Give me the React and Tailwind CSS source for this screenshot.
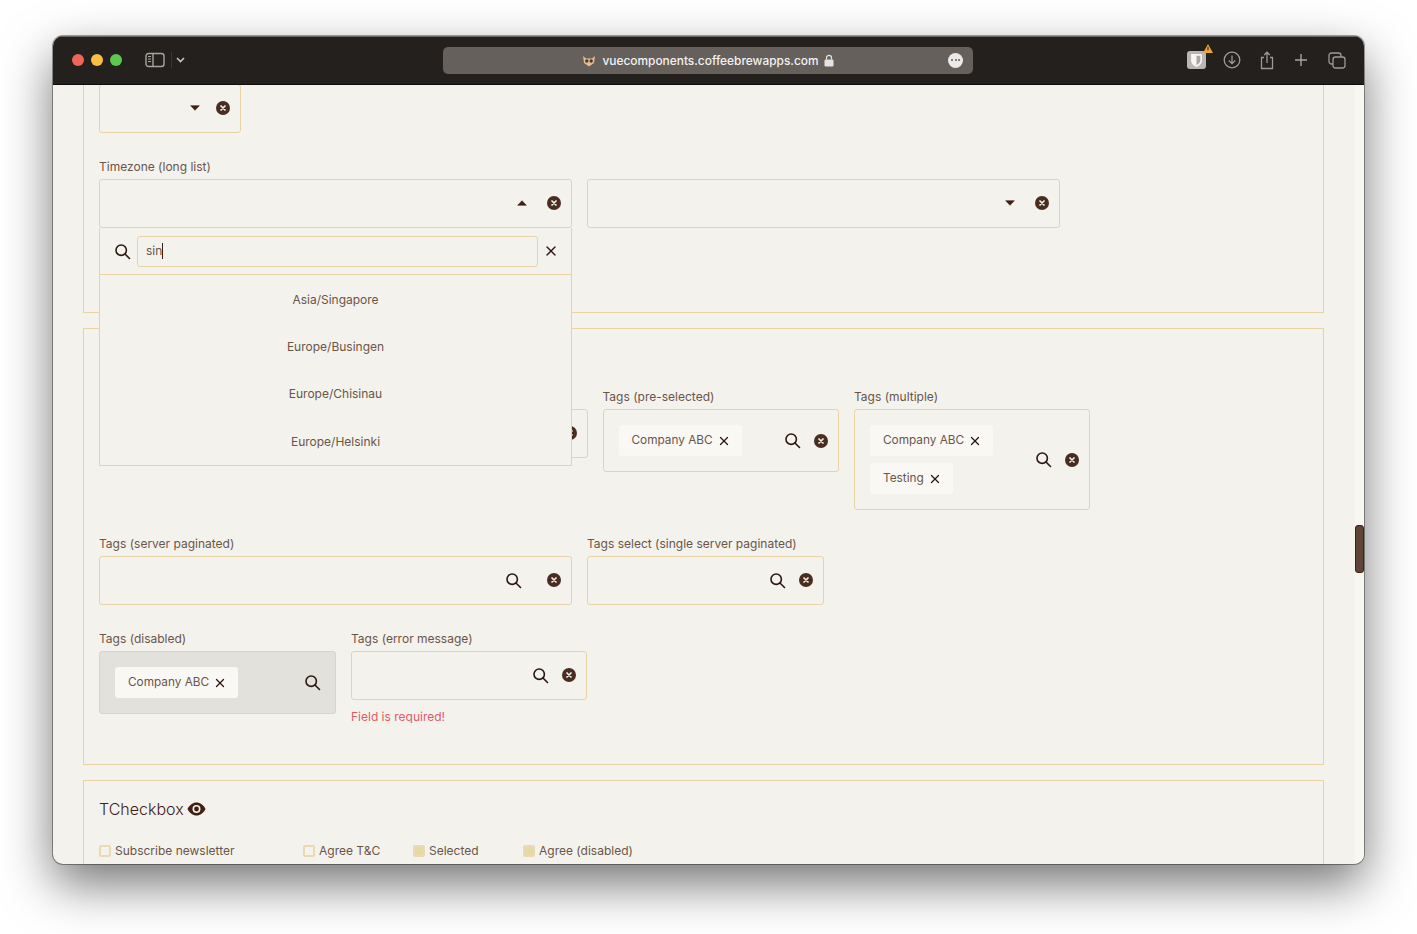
// Safari window showing the vue components form page
import React from "react";
import { X } from "lucide-react";

const timezones = ["Asia/Singapore", "Europe/Busingen", "Europe/Chisinau", "Europe/Helsinki"];

function ClearIcon() {
  return (
    <svg width="14" height="14" viewBox="0 0 14 14" className="shrink-0">
      <circle cx="7" cy="7" r="7" fill="#4a2c20" />
      <path d="M5 5l4 4M9 5l-4 4" stroke="#f4f2ed" strokeWidth="1.7" strokeLinecap="round" />
    </svg>
  );
}

function Caret({ up }) {
  return (
    <svg width="10" height="6" viewBox="0 0 10 6" className="shrink-0">
      <path d={up ? "M5 .7L9.300 5.300H.7z" : "M5 5.300L.7 .7h8.600z"} fill="#3f2114" stroke="#3f2114" strokeWidth=".6" strokeLinejoin="round" />
    </svg>
  );
}

function SearchIcon() {
  return (
    <svg width="17" height="17" viewBox="0 0 17 17" fill="none" stroke="#2c1710" strokeWidth="1.6" className="shrink-0">
      <circle cx="7.200" cy="7.200" r="5.200" />
      <path d="M11 11l4.500 4.500" strokeLinecap="round" />
    </svg>
  );
}

function Tag({ label }) {
  return (
    <div className="flex h-[31px] items-center gap-[4px] rounded-[3px] bg-[#faf8f4] pl-[13px] pr-[11px] pt-px text-[11.800px] text-[#6a5549]">
      <span>{label}</span>
      <X size={14} strokeWidth={2.200} className="text-[#2c1710]" />
    </div>
  );
}

function Field({ label, className, children }) {
  return (
    <div className={className}>
      <div className="mb-[3px] h-[18px] text-[12px] leading-[18px] text-[#6a5549]">{label}</div>
      {children}
    </div>
  );
}

function Box({ disabled, className, children }) {
  return (
    <div className={`flex items-center rounded-[3px] border border-[#e8d2a6] ${disabled ? "bg-[#e3e1dc]" : ""} ${className}`}>
      {children}
    </div>
  );
}

function SelectBox({ up, className }) {
  return (
    <Box className={`h-[49px] justify-end pb-px pr-[10px] ${className}`}>
      <Caret up={up} />
      <ClearIcon />
    </Box>
  );
}

function TagBox({ className, disabled, children }) {
  return (
    <Box disabled={disabled} className={`justify-between pl-[15px] ${disabled ? "pr-[14px]" : "pr-[10px]"} ${className}`}>
      <div className="flex flex-col items-start gap-[7px]">{children}</div>
      <div className="flex items-center gap-[13px]">
        <SearchIcon />
        {!disabled && <ClearIcon />}
      </div>
    </Box>
  );
}

function Checkbox({ label, checked, className }) {
  return (
    <div className={`flex items-center gap-[4px] text-[12px] text-[#6a5549] ${className}`}>
      <span className={`h-[12px] w-[12px] rounded-[2px] border-2 border-[#ecd9b3] ${checked ? "bg-[#e6d9a8]" : ""}`} />
      <span>{label}</span>
    </div>
  );
}

function TitleBar() {
  return (
    <div className="flex h-[49px] shrink-0 items-center border-b border-[#0f0d0c] bg-[#24201d] pl-[19px] pr-[18px] shadow-[inset_0_1px_0_#6b6865]">
      <div className="flex w-[371px] items-center">
        <span className="h-[12px] w-[12px] rounded-full bg-[#f1645b]" />
        <span className="ml-[7px] h-[12px] w-[12px] rounded-full bg-[#f8bf45]" />
        <span className="ml-[7px] h-[12px] w-[12px] rounded-full bg-[#5cc84f]" />
        <svg width="20" height="16" viewBox="0 0 20 16" className="ml-[23px]" fill="none" stroke="#a8a5a1" strokeWidth="1.4">
          <rect x="1" y="1.500" width="18" height="13" rx="2.500" />
          <path d="M8 1.500v13" />
          <path d="M3 4.500h3M3 7h3M3 9.500h3" strokeWidth="1" />
        </svg>
        <span className="ml-[6px] h-[16px] w-px bg-[#3a3632]" />
        <svg width="9" height="6" viewBox="0 0 9 6" className="ml-[4px]" fill="none" stroke="#c9c6c2" strokeWidth="1.600">
          <path d="M1 1l3.500 3.500L8 1" />
        </svg>
      </div>
      <div className="relative flex h-[27px] w-[530px] items-center justify-center rounded-[5px] bg-[#65605c]">
        <svg width="14" height="12" viewBox="0 0 14 12" className="mr-[6px] mt-[2px]">
          <path d="M1 1l3 2.500h6L13 1l-1 7-5 3.500L2 8z" fill="#e9b98f" />
          <circle cx="4.800" cy="6" r="1.700" fill="#4b3a30" />
          <circle cx="9.200" cy="6" r="1.700" fill="#4b3a30" />
        </svg>
        <span className="pt-px text-[11.900px] font-medium text-[#f4f2ef]">vuecomponents.coffeebrewapps.com</span>
        <svg width="10" height="13" viewBox="0 0 10 13" className="ml-[5px]" fill="#e6e4e1">
          <path d="M2.500 5.500V3.800a2.500 2.500 0 015 0v1.700" fill="none" stroke="#e6e4e1" strokeWidth="1.200" />
          <rect x=".5" y="5.500" width="9" height="7" rx="1.200" />
        </svg>
        <span className="absolute right-[10px] top-[6px] flex h-[15px] w-[15px] items-center justify-center gap-[1.500px] rounded-full bg-[#eceae8]">
          <i className="h-[2px] w-[2px] rounded-full bg-[#65605c]" />
          <i className="h-[2px] w-[2px] rounded-full bg-[#65605c]" />
          <i className="h-[2px] w-[2px] rounded-full bg-[#65605c]" />
        </span>
      </div>
      <div className="ml-auto flex items-center">
        <div className="relative">
          <span className="flex h-[18px] w-[19px] items-center justify-center rounded-[3px] bg-[#b9b7b4]">
            <svg width="11" height="13" viewBox="0 0 10 12">
              <path d="M0 0h10v6c0 3-2.500 4.800-5 6C2.500 10.800 0 9 0 6z" fill="#f7f6f4" />
              <path d="M5 1.500h3.500V6c0 2-1.800 3.300-3.500 4.300z" fill="#a9a7a4" />
            </svg>
          </span>
          <svg width="10" height="9" viewBox="0 0 9 8" className="absolute -right-[7px] -top-[7px]">
            <path d="M4.500 0L9 8H0z" fill="#eea52f" />
            <path d="M4.500 2.500v3" stroke="#24201d" strokeWidth="1" />
          </svg>
        </div>
        <svg width="18" height="18" viewBox="0 0 18 18" className="ml-[17px]" fill="none" stroke="#9c9996" strokeWidth="1.300">
          <circle cx="9" cy="9" r="7.800" />
          <path d="M9 4.500v8M5.800 9.500L9 12.700l3.200-3.200" />
        </svg>
        <svg width="18" height="19" viewBox="0 0 18 19" className="ml-[17px]" fill="none" stroke="#9c9996" strokeWidth="1.300">
          <path d="M6 6.500H3.500v11h11v-11H12" />
          <path d="M9 12V1.500M6.200 4L9 1.200 11.800 4" />
        </svg>
        <svg width="16" height="16" viewBox="0 0 16 16" className="ml-[17px]" fill="none" stroke="#a8a5a1" strokeWidth="1.400">
          <path d="M8 2v12M2 8h12" />
        </svg>
        <svg width="18" height="17" viewBox="0 0 18 17" className="ml-[19px]" fill="none" stroke="#9c9996" strokeWidth="1.300">
          <rect x="1" y="1" width="12" height="11" rx="2.500" />
          <rect x="5" y="5" width="12" height="11" rx="2.500" fill="#24201d" />
        </svg>
      </div>
    </div>
  );
}

function Section1() {
  return (
    <section className="relative border border-[#e8d2a6] px-[15px] pb-[84px] pt-[23px]">
      <SelectBox className="w-[142px] gap-[16px]" />
      <Field label="Timezone (long list)" className="mt-[25px]">
        <div className="flex gap-[15px]">
          <SelectBox up className="w-[473px] gap-[20px]" />
          <SelectBox className="w-[473px] gap-[20px]" />
        </div>
      </Field>
      {/* open dropdown hangs over the next section */}
      <div className="absolute left-[15px] top-[167px] z-10 w-[473px] border border-t-0 border-[#e8d2a6] bg-[#f4f2ed]">
        <div className="flex h-[47px] items-center border-b border-[#e8d2a6] pl-[14px] pr-[12px]">
          <SearchIcon />
          <div className="ml-[6px] flex h-[31px] flex-1 items-center rounded-[3px] border border-[#e8d2a6] pl-[8px] text-[12px] text-[#6a5549]">
            sin<span className="h-[16px] w-px bg-[#3f2114]" />
          </div>
          <X size={16} strokeWidth={2} className="ml-[5px] text-[#2c1710]" />
        </div>
        <div className="h-[190px] overflow-hidden pt-px">
          {timezones.map((tz) => (
            <div key={tz} className="flex h-[47.300px] items-center justify-center text-[12px] text-[#6a5549]">
              {tz}
            </div>
          ))}
        </div>
      </div>
    </section>
  );
}

function Section2() {
  return (
    <section className="mt-[15px] h-[437px] border border-[#e8d2a6] px-[15px] pt-[59px]">
      <div className="flex items-start gap-[15px]">
        <Field label="Tags" className="w-[488.500px]">
          <Box className="h-[49px] justify-end pb-px pr-[10px]">
            <ClearIcon />
          </Box>
        </Field>
        <Field label="Tags (pre-selected)" className="w-[236.500px]">
          <TagBox className="h-[63px]">
            <Tag label="Company ABC" />
          </TagBox>
        </Field>
        <Field label="Tags (multiple)" className="w-[236px]">
          <TagBox className="h-[101px]">
            <Tag label="Company ABC" />
            <Tag label="Testing" />
          </TagBox>
        </Field>
      </div>
      <div className="mt-[25px] flex items-start gap-[15px]">
        <Field label="Tags (server paginated)" className="w-[473px]">
          <Box className="h-[49px] justify-end gap-[25px] pb-px pr-[10px]">
            <SearchIcon />
            <ClearIcon />
          </Box>
        </Field>
        <Field label="Tags select (single server paginated)" className="w-[237px]">
          <Box className="h-[49px] justify-end gap-[13px] pb-px pr-[10px]">
            <SearchIcon />
            <ClearIcon />
          </Box>
        </Field>
      </div>
      <div className="mt-[25px] flex items-start gap-[15px]">
        <Field label="Tags (disabled)" className="w-[237px]">
          <TagBox disabled className="h-[63px]">
            <Tag label="Company ABC" />
          </TagBox>
        </Field>
        <Field label="Tags (error message)" className="w-[236px]">
          <Box className="h-[49px] justify-end gap-[13px] pb-px pr-[10px]">
            <SearchIcon />
            <ClearIcon />
          </Box>
          <div className="mt-[8px] text-[12px] leading-[18px] text-[#e05a6a]">Field is required!</div>
        </Field>
      </div>
    </section>
  );
}

function Section3() {
  return (
    <section className="mt-[15px] h-[120px] border border-[#e8d2a6] px-[15px] pt-[16px]">
      <div className="flex items-center gap-[3px] text-[16px] font-light leading-[24px] text-[#3f2114]">
        <span>TCheckbox</span>
        <svg width="19" height="14" viewBox="0 0 19 14">
          <path d="M.5 7C2.500 3 5.800.5 9.500.5S16.500 3 18.500 7c-2 4-5.300 6.500-9 6.500S2.500 11 .5 7z" fill="#3f2114" />
          <circle cx="9.500" cy="7" r="4" fill="#f4f2ed" />
          <circle cx="9.500" cy="7" r="2.400" fill="#3f2114" />
        </svg>
      </div>
      <div className="mt-[21px] flex items-center">
        <Checkbox label="Subscribe newsletter" className="w-[204px]" />
        <Checkbox label="Agree T&C" className="w-[110px]" />
        <Checkbox label="Selected" checked className="w-[110px]" />
        <Checkbox label="Agree (disabled)" checked />
      </div>
    </section>
  );
}

export default function App() {
  return (
    <div className="h-[934px] overflow-hidden bg-white pl-[53px] pt-[36px] font-['Inter',sans-serif]">
      <div className="relative flex h-[828px] w-[1311px] flex-col overflow-hidden rounded-[10px] bg-[#f4f2ed] shadow-[0_20px_50px_rgba(0,0,0,0.55),0_0_0_1px_rgba(90,90,90,0.55)]">
        <TitleBar />
        <div className="flex-1 overflow-hidden">
          <div className="ml-[30px] mt-[-25px] w-[1241px]">
            <Section1 />
            <Section2 />
            <Section3 />
          </div>
        </div>
        <div className="absolute bottom-0 right-0 top-[49px] w-[9px] bg-[#f8f7f2]" />
        <div className="absolute right-0 top-[489px] h-[48px] w-[9px] rounded-[3px] border border-[#3f2114] bg-[#5f4437]" />
      </div>
    </div>
  );
}
